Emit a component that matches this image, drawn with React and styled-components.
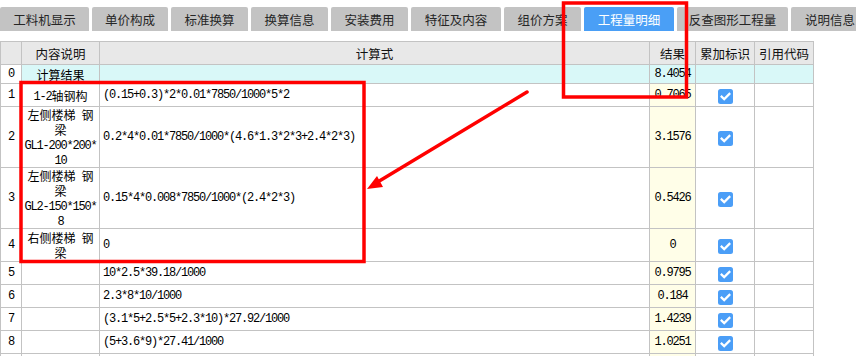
import React from "react"
import styled, { createGlobalStyle } from "styled-components"

const GlobalStyle = createGlobalStyle`
  html, body {
    margin: 0;
    padding: 0;
    background: #ffffff;
  }
  body {
    width: 856px;
    height: 356px;
    overflow: hidden;
    font-family: "Noto Sans CJK SC", "Noto Sans", sans-serif;
  }
`

const tabs = [
  { label: "工料机显示", width: 89 },
  { label: "单价构成", width: 76 },
  { label: "标准换算", width: 77 },
  { label: "换算信息", width: 77 },
  { label: "安装费用", width: 77 },
  { label: "特征及内容", width: 90 },
  { label: "组价方案", width: 77 },
  { label: "工程量明细", width: 90, active: true },
  { label: "反查图形工程量", width: 111 },
  { label: "说明信息", width: 78 },
]

const rows = [
  { no: "0", desc: ["计算结果"], formula: "", result: "8.4054", total: true, height: 19 },
  { no: "1", desc: ["1-2轴钢构"], formula: "(0.15+0.3)*2*0.01*7850/1000*5*2", result: "0.7065", checked: true, height: 23 },
  { no: "2", desc: ["左侧楼梯 钢", "梁", "GL1-200*200*", "10"], formula: "0.2*4*0.01*7850/1000*(4.6*1.3*2*3+2.4*2*3)", result: "3.1576", checked: true, height: 61 },
  { no: "3", desc: ["左侧楼梯 钢", "梁", "GL2-150*150*", "8"], formula: "0.15*4*0.008*7850/1000*(2.4*2*3)", result: "0.5426", checked: true, height: 61 },
  { no: "4", desc: ["右侧楼梯 钢", "梁"], formula: "0", result: "0", checked: true, height: 33 },
  { no: "5", desc: [], formula: "10*2.5*39.18/1000", result: "0.9795", checked: true, height: 23 },
  { no: "6", desc: [], formula: "2.3*8*10/1000", result: "0.184", checked: true, height: 23 },
  { no: "7", desc: [], formula: "(3.1*5+2.5*5+2.3*10)*27.92/1000", result: "1.4239", checked: true, height: 23 },
  { no: "8", desc: [], formula: "(5+3.6*9)*27.41/1000", result: "1.0251", checked: true, height: 23 },
  { no: "", desc: [], formula: "", result: "", height: 23 },
]

// split a line into ascii runs (mono) and CJK runs
const MixedText = ({ text }) => {
  const parts = text.match(/[\x00-\x7f]+|[^\x00-\x7f]+/g) || []
  return parts.map((p, i) =>
    /^[\x00-\x7f]+$/.test(p) ? <Mono key={i}>{p}</Mono> : <span key={i}>{p}</span>
  )
}

const CheckBox = () => (
  <Box>
    <svg width="15" height="15" viewBox="0 0 15 15">
      <rect x="0" y="0" width="15" height="15" rx="2.5" fill="#4b9ef7" />
      <path d="M3.6 7.6 L6.2 10.1 L11.4 4.9" stroke="#ffffff" strokeWidth="2.2" fill="none" strokeLinecap="square" />
    </svg>
  </Box>
)

const App = () => {
  return (
    <Page>
      <GlobalStyle />
      <TabBar>
        {tabs.map(t => (
          <Tab key={t.label} $width={t.width} $active={t.active}>
            {t.label}
          </Tab>
        ))}
      </TabBar>

      <Grid>
        <colgroup>
          <col style={{ width: 21 }} />
          <col style={{ width: 78 }} />
          <col style={{ width: 550 }} />
          <col style={{ width: 46 }} />
          <col style={{ width: 59 }} />
          <col style={{ width: 59 }} />
        </colgroup>
        <thead>
          <tr>
            <HeadCell />
            <HeadCell>内容说明</HeadCell>
            <HeadCell>计算式</HeadCell>
            <HeadCell>结果</HeadCell>
            <HeadCell>累加标识</HeadCell>
            <HeadCell>引用代码</HeadCell>
          </tr>
        </thead>
        <tbody>
          {rows.map((r, i) => (
            <Row key={i} $height={r.height}>
              <NumCell>{r.no}</NumCell>
              <DescCell $total={r.total}>
                {r.desc.map((line, j) => (
                  <DescLine key={j}>
                    <MixedText text={line} />
                  </DescLine>
                ))}
              </DescCell>
              <FormulaCell $total={r.total}>{r.formula}</FormulaCell>
              <ResultCell $total={r.total}>{r.result}</ResultCell>
              <FlagCell $total={r.total}>{r.checked && <CheckBox />}</FlagCell>
              <CodeCell $total={r.total} />
            </Row>
          ))}
        </tbody>
      </Grid>

      <Markup width="856" height="356" viewBox="0 0 856 356">
        <rect x="563.5" y="3" width="123" height="94" fill="none" stroke="#ff0000" strokeWidth="3.5" />
        <rect x="21" y="82.5" width="343" height="179" fill="none" stroke="#ff0000" strokeWidth="3.5" />
        <line x1="527" y1="92" x2="376" y2="183" stroke="#ff0000" strokeWidth="3.5" strokeLinecap="round" />
        <polygon points="367,189 377,176 383,187" fill="#ff0000" />
      </Markup>
    </Page>
  )
}

export default App

// STYLED CSS
const Page = styled.div`
  position: relative;
  width: 856px;
  height: 356px;
  overflow: hidden;
  background: #ffffff;
`

const TabBar = styled.div`
  display: flex;
  gap: 3px;
  height: 24px;
  padding-top: 7px;
  border-top: 2px solid #c4c4c4;
  box-sizing: content-box;
  margin-top: -2px;
  overflow: hidden;
  white-space: nowrap;
`

const Tab = styled.div`
  flex: 0 0 ${p => p.$width}px;
  height: 24px;
  display: flex;
  align-items: center;
  justify-content: center;
  font-size: 12.5px;
  color: ${p => (p.$active ? "#ffffff" : "#262626")};
  background: ${p => (p.$active ? "#4a9ff6" : "#c3c3c3")};
  border-radius: 2px 2px 0 0;
`

const Grid = styled.table`
  margin-top: 10px;
  width: 814px;
  table-layout: fixed;
  border-collapse: collapse;
  font-size: 12px;
  color: #000000;
`

const Cell = styled.td`
  border: 1px solid #c3c3c3;
  padding: 0 2px;
  overflow: hidden;
  white-space: nowrap;
  vertical-align: middle;
  box-sizing: border-box;
  line-height: 15px;
`

const HeadCell = styled(Cell).attrs({ as: "th" })`
  height: 23px;
  background: #e8e8e8;
  font-weight: 400;
  text-align: center;
  font-size: 12.5px;
  color: #111111;
`

const Row = styled.tr`
  height: ${p => p.$height}px;
`

const Mono = styled.span`
  font-family: "Liberation Mono", "DejaVu Sans Mono", monospace;
  font-size: 12px;
  letter-spacing: -1.2px;
  vertical-align: 1px;
`

const NumCell = styled(Cell)`
  text-align: center;
  font-family: "Liberation Mono", "DejaVu Sans Mono", monospace;
  font-size: 12px;
  letter-spacing: -1.2px;
  background: #ffffff;
`

const DescCell = styled(Cell)`
  text-align: center;
  padding: 0;
  background: ${p => (p.$total ? "#d9f8f8" : "#ffffff")};
`

const DescLine = styled.div`
  line-height: 15px;
  height: 15px;
`

const FormulaCell = styled(Cell)`
  padding-left: 3px;
  font-family: "Liberation Mono", "DejaVu Sans Mono", monospace;
  font-size: 12px;
  letter-spacing: -1.2px;
  background: ${p => (p.$total ? "#d9f8f8" : "#ffffff")};
`

const ResultCell = styled(Cell)`
  text-align: center;
  padding: 0;
  font-family: "Liberation Mono", "DejaVu Sans Mono", monospace;
  font-size: 12px;
  letter-spacing: -1.2px;
  background: ${p => (p.$total ? "#d9f8f8" : "#fffee8")};
`

const FlagCell = styled(Cell)`
  text-align: center;
  background: ${p => (p.$total ? "#d9f8f8" : "#ffffff")};
`

const CodeCell = styled(Cell)`
  background: ${p => (p.$total ? "#d9f8f8" : "#ffffff")};
`

const Box = styled.span`
  display: inline-flex;
  vertical-align: middle;
`

const Markup = styled.svg`
  position: absolute;
  left: 0;
  top: 0;
  pointer-events: none;
`
